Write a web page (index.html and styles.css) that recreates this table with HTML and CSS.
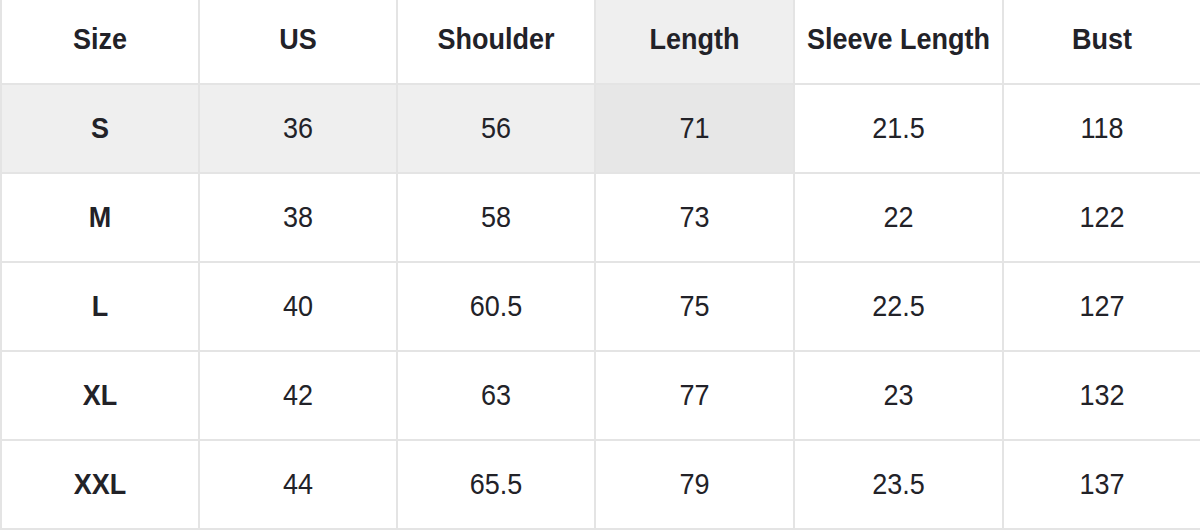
FILE: index.html
```html
<!DOCTYPE html>
<html lang="en">
<head>
<meta charset="utf-8">
<title>Size Chart</title>
<link rel="stylesheet" href="styles.css">
</head>
<body>
<div class="chart">
  <div class="cell head"><span>Size</span></div>
  <div class="cell head"><span>US</span></div>
  <div class="cell head"><span>Shoulder</span></div>
  <div class="cell head hl"><span>Length</span></div>
  <div class="cell head"><span>Sleeve Length</span></div>
  <div class="cell head"><span>Bust</span></div>

  <div class="cell size hl"><span>S</span></div>
  <div class="cell hl"><span>36</span></div>
  <div class="cell hl"><span>56</span></div>
  <div class="cell hl2"><span>71</span></div>
  <div class="cell"><span>21.5</span></div>
  <div class="cell"><span>118</span></div>

  <div class="cell size"><span>M</span></div>
  <div class="cell"><span>38</span></div>
  <div class="cell"><span>58</span></div>
  <div class="cell"><span>73</span></div>
  <div class="cell"><span>22</span></div>
  <div class="cell"><span>122</span></div>

  <div class="cell size"><span>L</span></div>
  <div class="cell"><span>40</span></div>
  <div class="cell"><span>60.5</span></div>
  <div class="cell"><span>75</span></div>
  <div class="cell"><span>22.5</span></div>
  <div class="cell"><span>127</span></div>

  <div class="cell size"><span>XL</span></div>
  <div class="cell"><span>42</span></div>
  <div class="cell"><span>63</span></div>
  <div class="cell"><span>77</span></div>
  <div class="cell"><span>23</span></div>
  <div class="cell"><span>132</span></div>

  <div class="cell size"><span>XXL</span></div>
  <div class="cell"><span>44</span></div>
  <div class="cell"><span>65.5</span></div>
  <div class="cell"><span>79</span></div>
  <div class="cell"><span>23.5</span></div>
  <div class="cell"><span>137</span></div>
</div>
</body>
</html>
```
FILE: styles.css
```css
html, body {
  margin: 0;
  padding: 0;
  background: #ffffff;
}

.chart {
  display: grid;
  grid-template-columns: 198px 198px 198px 199px 209px 198px;
  grid-template-rows: 85px repeat(5, 89px);
  width: 1200px;
  font-family: "Liberation Sans", Arial, sans-serif;
  font-size: 27px;
  color: #222228;
}

.cell {
  display: flex;
  align-items: center;
  justify-content: center;
  border-left: 2px solid #e4e4e4;
  border-bottom: 2px solid #e4e4e4;
  background: #ffffff;
}

.cell span {
  display: inline-block;
  transform: scaleY(1.12);
}

.head {
  font-weight: bold;
  padding-bottom: 4px;
}

.size {
  font-weight: bold;
}

.hl {
  background: #efefef;
}

.hl2 {
  background: #e7e7e7;
}
```
